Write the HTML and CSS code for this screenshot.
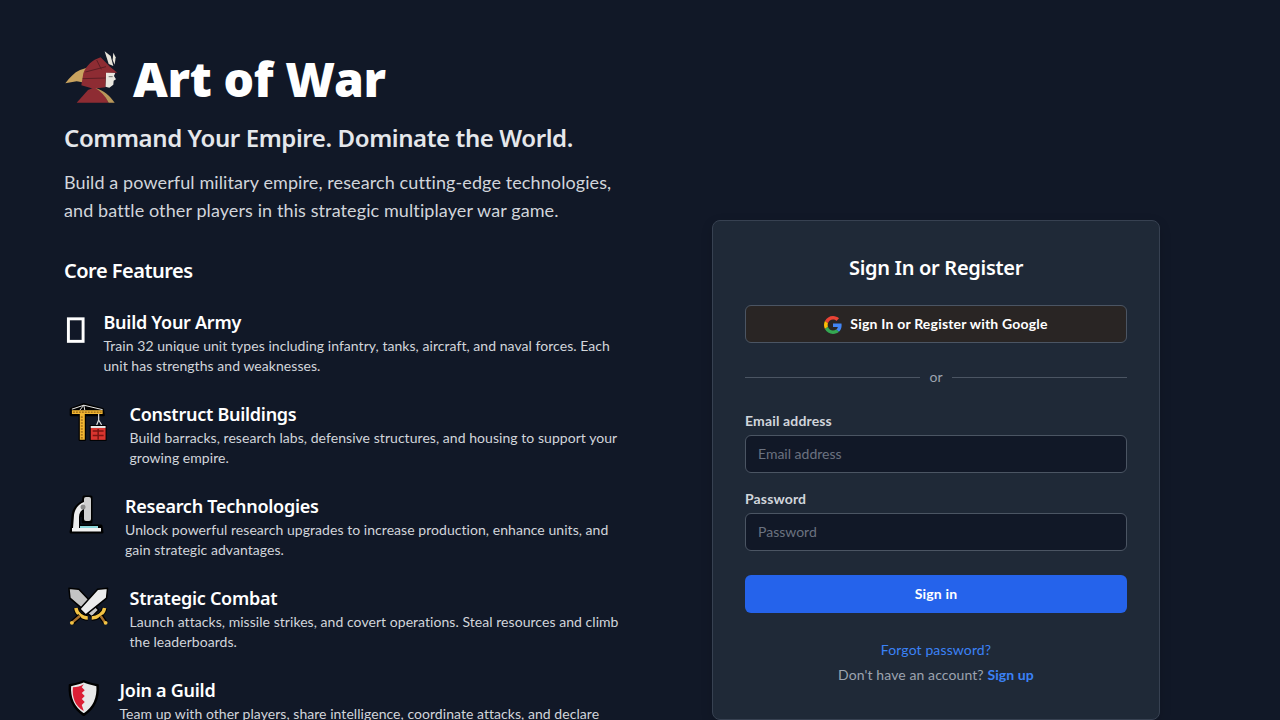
FILE: index.html
```html
<!DOCTYPE html>
<html>
<head>
<meta charset="utf-8">
<title>Art of War</title>
<link rel="stylesheet" href="styles.css">
</head>
<body>
<div class="page">
  <div class="intro">
    <div class="brand">
      <svg class="brand-logo" viewBox="12 0 180 168">
        <path d="M16,100 C30,82 42,68 60,60 L90,50 L84,100 L50,94 Z" fill="#c9a35f"></path>
        <path d="M134,4 L152,18 L160,48 L146,42 Z" fill="#e8e4da"></path>
        <path d="M160,8 L167,22 L164,44 L158,30 Z" fill="#e8e4da"></path>
        <path d="M138,66 L166,68 L162,78 L168,88 L161,92 L160,104 L148,113 L136,110 Z" fill="#e9e6df"></path>
        <path d="M70,70 C78,48 96,30 122,22 L150,50 L172,68 L138,68 L136,112 L100,116 L64,106 Z" fill="#8e2c33"></path>
        <path d="M76,66 L138,50 M68,86 L136,84 M110,30 L124,58" stroke="#5c1d24" stroke-width="3" fill="none"></path>
        <path d="M146,80 L158,80" stroke="#3b3b3b" stroke-width="2"></path>
        <path d="M50,158 L84,120 L104,112 L128,126 L146,158 Z" fill="#8e2c33"></path>
        <path d="M106,114 C130,120 150,138 164,158 L146,158 C136,138 122,124 106,114 Z" fill="#b9975a"></path>
      </svg>
      <h1 class="brand-name">Art of War</h1>
    </div>
    <h2 class="tagline">Command Your Empire. Dominate the World.</h2>
    <p class="lead">Build a powerful military empire, research cutting-edge technologies, and battle other players in this strategic multiplayer war game.</p>
    <h3 class="section-title">Core Features</h3>

    <div class="feature">
      <svg class="icon icon-army" viewBox="0 0 24 50">
        <rect x="4.5" y="9.5" width="15" height="23" fill="none" stroke="#fff" stroke-width="3"></rect>
      </svg>
      <div>
        <h4>Build Your Army</h4>
        <p>Train 32 unique unit types including infantry, tanks, aircraft, and naval forces. Each unit has strengths and weaknesses.</p>
      </div>
    </div>

    <div class="feature">
      <svg class="icon icon-crane" viewBox="0 0 50 50">
        <path d="M7,8 L20,3 L39,8 L40,14 L21,14 L21,39 L16,39 L16,14 L7,14 Z" fill="#000" stroke="#000" stroke-width="2.5" stroke-linejoin="round"></path>
        <path d="M8,9 L39,9 L39,13 L21,13 L21,39 L16,39 L16,13 L8,13 Z" fill="#f2b632"></path>
        <path d="M8,8 L20,4 L39,8.5 M16,9 L20,4 L21,9" fill="none" stroke="#e8e8e8" stroke-width="1"></path>
        <path d="M17,16 L20,16 M17,19 L20,19 M17,22 L20,22 M17,25 L20,25 M17,28 L20,28 M17,31 L20,31 M17,34 L20,34 M17,37 L20,37 M9,11 L38,11" stroke="#7d5210" stroke-width="1" stroke-dasharray="2 1"></path>
        <path d="M35,13 L35,19 L33,24 M35,19 L38,24" fill="none" stroke="#ddd" stroke-width="1.2"></path>
        <rect x="26" y="24" width="17" height="16" fill="#000"></rect>
        <rect x="27" y="25" width="15" height="2" fill="#e8e8e8"></rect>
        <rect x="27" y="27" width="15" height="12" fill="#d8352f"></rect>
        <path d="M29,30 L40,30 M34.5,28 L34.5,39 M29,34.5 L40,34.5" stroke="#7a1512" stroke-width="1.5"></path>
      </svg>
      <div>
        <h4>Construct Buildings</h4>
        <p>Build barracks, research labs, defensive structures, and housing to support your growing empire.</p>
      </div>
    </div>

    <div class="feature">
      <svg class="icon icon-lab" viewBox="0 0 45 50">
        <path d="M8,34 L9,22 C10,15 15,11 19,9 L20,4 L27,4 L27,29 L19,29 L19,20 L15,24 L15,33 L37,33 L38,39 L7,39 Z" fill="#000" stroke="#000" stroke-width="3" stroke-linejoin="round"></path>
        <path d="M9,35 L10,22 C11,15 15,11 20,9 L21,15 C17,17 15,20 15,24 L15,35 Z" fill="#ececec"></path>
        <rect x="20" y="4" width="7" height="24" rx="2" fill="#cfcfcf"></rect>
        <circle cx="19" cy="14" r="2.5" fill="#8a8a8a"></circle>
        <rect x="8" y="35" width="29" height="3.5" fill="#f1f1f1"></rect>
        <rect x="16" y="33" width="18" height="2" fill="#8fd8dc"></rect>
      </svg>
      <div>
        <h4>Research Technologies</h4>
        <p>Unlock powerful research upgrades to increase production, enhance units, and gain strategic advantages.</p>
      </div>
    </div>

    <div class="feature">
      <svg class="icon icon-swords" viewBox="0 0 50 50">
        <path d="M5,3 L15,4 L35,25 L28,32 L6,13 Z" fill="#c4c4c4" stroke="#000" stroke-width="1.5" stroke-linejoin="round"></path>
        <path d="M44,3 L34,4 L16,24 L22,30 L43,13 Z" fill="#ececec" stroke="#000" stroke-width="1.5" stroke-linejoin="round"></path>
        <path d="M12,23 C13,29 18,33 24,33 M41,23 C40,29 34,33 28,33" fill="none" stroke="#000" stroke-width="5.5"></path>
        <path d="M12,23 C13,29 18,33 24,33 M41,23 C40,29 34,33 28,33" fill="none" stroke="#f2c244" stroke-width="3.5"></path>
        <path d="M16,31 L8,38 M37,31 L42,38" stroke="#000" stroke-width="5"></path>
        <path d="M16,31 L9,37 M37,31 L41,37" stroke="#a8702c" stroke-width="2.5"></path>
        <circle cx="8" cy="38" r="2" fill="#f2c244"></circle>
        <circle cx="42" cy="38" r="2" fill="#f2c244"></circle>
      </svg>
      <div>
        <h4>Strategic Combat</h4>
        <p>Launch attacks, missile strikes, and covert operations. Steal resources and climb the leaderboards.</p>
      </div>
    </div>

    <div class="feature">
      <svg class="icon icon-guild" viewBox="0 0 40 50">
        <path d="M20,4 C24,6 29,7 34,8 C35,21 31,31 20,38 C9,31 5,21 6,8 C11,7 16,6 20,4 Z" fill="#e8e8e8" stroke="#000" stroke-width="2.5" stroke-linejoin="round"></path>
        <path d="M20,7 L18,10 L21,13 L18,16 L21,19 L18,22 L21,25 L18,28 L20,34 C11,29 8,20 9,10 C13,10 17,9 20,7 Z" fill="#dc1f35"></path>
      </svg>
      <div>
        <h4>Join a Guild</h4>
        <p>Team up with other players, share intelligence, coordinate attacks, and declare war on rival guilds.</p>
      </div>
    </div>
  </div>

  <div class="side">
    <div class="card">
      <h2 class="card-title">Sign In or Register</h2>
      <button class="btn btn-google">
        <svg class="google" viewBox="0 0 48 48">
          <path fill="#EA4335" d="M24 9.5c3.54 0 6.71 1.22 9.21 3.6l6.85-6.85C35.9 2.38 30.47 0 24 0 14.62 0 6.51 5.38 2.56 13.22l7.98 6.19C12.43 13.72 17.74 9.5 24 9.5z"></path>
          <path fill="#4285F4" d="M46.98 24.55c0-1.57-.15-3.09-.38-4.55H24v9.02h12.94c-.58 2.96-2.26 5.48-4.78 7.18l7.73 6c4.51-4.18 7.09-10.36 7.09-17.65z"></path>
          <path fill="#FBBC05" d="M10.53 28.59c-.48-1.45-.76-2.99-.76-4.59s.27-3.14.76-4.59l-7.98-6.19C.92 16.46 0 20.12 0 24c0 3.88.92 7.54 2.56 10.78l7.97-6.19z"></path>
          <path fill="#34A853" d="M24 48c6.48 0 11.93-2.13 15.89-5.81l-7.73-6c-2.15 1.45-4.92 2.3-8.16 2.3-6.26 0-11.57-4.22-13.47-9.91l-7.98 6.19C6.51 42.62 14.62 48 24 48z"></path>
        </svg>
        Sign In or Register with Google
      </button>
      <div class="divider"><span>or</span></div>
      <label class="field-label">Email address</label>
      <input class="field" type="email" placeholder="Email address">
      <label class="field-label">Password</label>
      <input class="field" type="password" placeholder="Password">
      <button class="btn btn-primary">Sign in</button>
      <a class="forgot" href="#">Forgot password?</a>
      <p class="signup">Don't have an account? <a href="#">Sign up</a></p>
    </div>
  </div>
</div>
</body>
</html>
```

FILE: styles.css
```css
html,body{
  margin:0;
  padding:0;
  height:100%;
  overflow:hidden;
}
body{
  background:#111827;
  color:#fff;
  font-family:Lato,"Noto Sans",Arial,sans-serif;
}
h1,h2,h3,h4,p{
  margin:0;
}
.page{
  display:flex;
  height:100vh;
}
.intro{
  width:640px;
  box-sizing:border-box;
  padding:47px 20px 0 64px;
}
.brand{
  display:flex;
  align-items:center;
  gap:9px;
  height:64px;
}
.brand-logo{
  width:60px;
  height:56px;
  margin-top:-2px;
}
.brand-name{
  font-family:"Noto Sans",Arial,sans-serif;
  font-size:48px;
  line-height:64px;
  font-weight:900;
  letter-spacing:-0.35px;
}
.tagline{
  font-family:"Noto Sans",Arial,sans-serif;
  font-size:24px;
  line-height:32px;
  font-weight:600;
  letter-spacing:-0.4px;
  color:#e5e7eb;
  margin-top:11px;
}
.lead{
  font-size:18px;
  line-height:28px;
  letter-spacing:0.1px;
  color:#d1d5db;
  margin-top:14px;
}
.section-title{
  font-family:"Noto Sans",Arial,sans-serif;
  font-size:20px;
  line-height:28px;
  font-weight:600;
  letter-spacing:-0.5px;
  margin-top:33px;
  margin-bottom:24px;
}
.feature{
  display:flex;
  gap:16px;
  margin-bottom:25px;
}
.feature h4{
  font-family:"Noto Sans",Arial,sans-serif;
  font-size:18px;
  line-height:27px;
  font-weight:600;
  letter-spacing:-0.27px;
}
.feature p{
  font-size:14px;
  line-height:20px;
  letter-spacing:0.05px;
  color:#d1d5db;
}
.icon{
  flex:none;
  height:50px;
}
.icon-army{width:23.5px;}
.icon-crane{width:49.5px;}
.icon-lab{width:45px;}
.icon-swords{width:49.5px;}
.icon-guild{width:39.5px;}
.side{
  width:592px;
  padding-top:220px;
  display:flex;
  justify-content:center;
}
.card{
  width:448px;
  height:500px;
  box-sizing:border-box;
  padding:33px 32px 32px;
  background:#1f2937;
  border:1px solid #374151;
  border-radius:8px;
  box-shadow:0 4px 12px rgba(0,0,0,0.15);
}
.card-title{
  font-family:"Noto Sans",Arial,sans-serif;
  font-size:20px;
  line-height:28px;
  font-weight:600;
  letter-spacing:-0.3px;
  text-align:center;
  margin-bottom:23px;
}
.btn{
  display:flex;
  align-items:center;
  justify-content:center;
  width:100%;
  height:38px;
  box-sizing:border-box;
  padding-bottom:2px;
  border-radius:6px;
  font-family:inherit;
  font-size:14px;
  font-weight:700;
  letter-spacing:0.2px;
  color:#fff;
  cursor:pointer;
}
.btn-google{
  background:#292524;
  border:1px solid #4b5563;
  gap:8px;
}
.google{
  width:18px;
  height:18px;
  margin-top:2px;
}
.btn-primary{
  background:#2563eb;
  border:none;
  margin-top:24px;
}
.divider{
  display:flex;
  align-items:center;
  gap:8px;
  margin:24px 0;
  font-size:14px;
  line-height:20px;
  color:#9ca3af;
}
.divider::before,.divider::after{
  content:"";
  flex:1;
  height:1px;
  background:#4b5563;
}
.divider span{
  padding:0 1px;
}
.field-label{
  display:block;
  font-size:14px;
  line-height:20px;
  font-weight:700;
  letter-spacing:0.15px;
  color:#d1d5db;
  margin-bottom:4px;
}
.field{
  display:block;
  width:100%;
  height:38px;
  box-sizing:border-box;
  padding:0 12px 2px;
  background:#111827;
  border:1px solid #4b5563;
  border-radius:6px;
  font-family:inherit;
  font-size:14px;
  color:#fff;
  margin-bottom:16px;
}
.field::placeholder{
  color:#6b7280;
}
.field + .btn{
  margin-top:24px;
}
.forgot{
  display:block;
  text-align:center;
  font-size:14px;
  line-height:20px;
  letter-spacing:0.12px;
  color:#3b82f6;
  text-decoration:none;
  margin-top:27px;
}
.signup{
  text-align:center;
  font-size:14px;
  line-height:20px;
  letter-spacing:0.1px;
  color:#9ca3af;
  margin-top:5px;
}
.signup a{
  color:#3b82f6;
  font-weight:700;
  text-decoration:none;
}
```
